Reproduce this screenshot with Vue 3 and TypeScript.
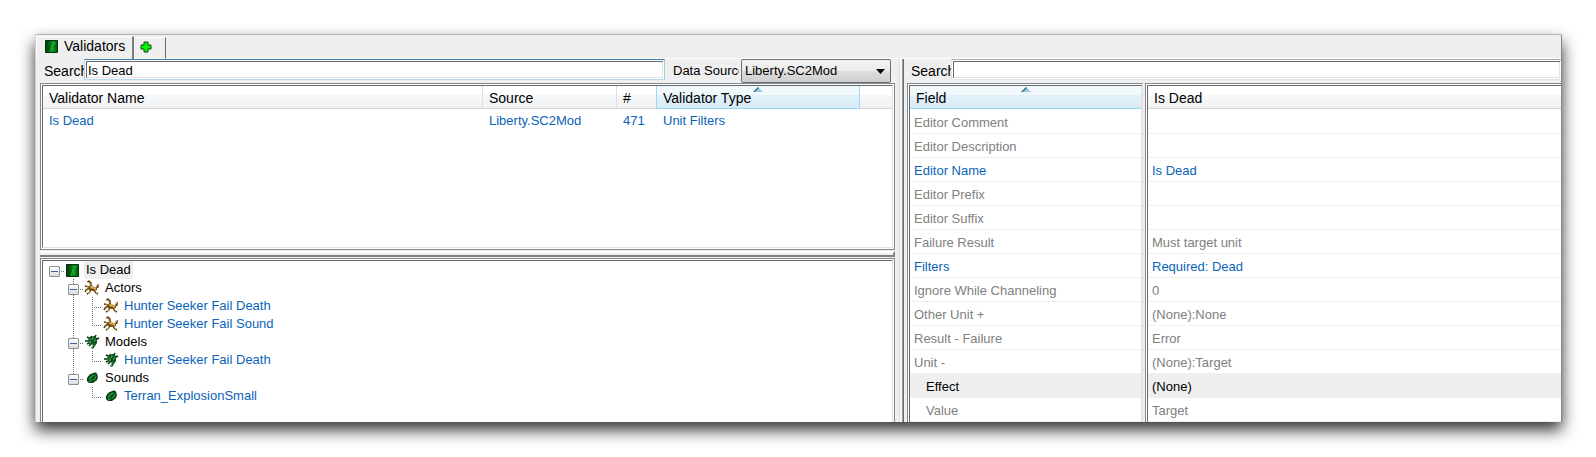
<script setup lang="ts">
import { ref } from 'vue'

type IconKind = 'validator' | 'actor' | 'model' | 'sound'
type Guide = 'blank' | 'line' | 'tee' | 'end' | 'toggle-first' | 'toggle-mid' | 'toggle-last'

interface TreeRow {
  label: string
  icon: IconKind
  guides: Guide[]
  level: number
  linked?: boolean
  selected?: boolean
}

interface FieldRow {
  name: string
  value: string
  state: 'default' | 'changed' | 'selected'
  nested?: boolean
}

const validatorSearch = ref('Is Dead')
const fieldSearch = ref('')
const source = ref('Liberty.SC2Mod')

const treeRows: TreeRow[] = [
  { label: 'Is Dead', icon: 'validator', guides: ['toggle-first'], level: 1, selected: true },
  { label: 'Actors', icon: 'actor', guides: ['blank', 'toggle-mid'], level: 2 },
  { label: 'Hunter Seeker Fail Death', icon: 'actor', guides: ['blank', 'line', 'tee'], level: 3, linked: true },
  { label: 'Hunter Seeker Fail Sound', icon: 'actor', guides: ['blank', 'line', 'end'], level: 3, linked: true },
  { label: 'Models', icon: 'model', guides: ['blank', 'toggle-mid'], level: 2 },
  { label: 'Hunter Seeker Fail Death', icon: 'model', guides: ['blank', 'line', 'end'], level: 3, linked: true },
  { label: 'Sounds', icon: 'sound', guides: ['blank', 'toggle-last'], level: 2 },
  { label: 'Terran_ExplosionSmall', icon: 'sound', guides: ['blank', 'blank', 'end'], level: 3, linked: true },
]

const fields: FieldRow[] = [
  { name: 'Editor Comment', value: '', state: 'default' },
  { name: 'Editor Description', value: '', state: 'default' },
  { name: 'Editor Name', value: 'Is Dead', state: 'changed' },
  { name: 'Editor Prefix', value: '', state: 'default' },
  { name: 'Editor Suffix', value: '', state: 'default' },
  { name: 'Failure Result', value: 'Must target unit', state: 'default' },
  { name: 'Filters', value: 'Required: Dead', state: 'changed' },
  { name: 'Ignore While Channeling', value: '0', state: 'default' },
  { name: 'Other Unit +', value: '(None):None', state: 'default' },
  { name: 'Result - Failure', value: 'Error', state: 'default' },
  { name: 'Unit -', value: '(None):Target', state: 'default' },
  { name: 'Effect', value: '(None)', state: 'selected', nested: true },
  { name: 'Value', value: 'Target', state: 'default', nested: true },
]

const verticalPath: Record<Guide, string> = {
  blank: '',
  line: 'M9.5 0V18',
  tee: 'M9.5 0V18M9 10.5H19',
  end: 'M9.5 0V10M9 10.5H19',
  'toggle-first': 'M16 10.5H19',
  'toggle-mid': 'M9.5 0V5M9.5 16V18M16 10.5H19',
  'toggle-last': 'M9.5 0V5M16 10.5H19',
}

const isToggle = (guide: Guide): boolean => guide.startsWith('toggle')
</script>

<template>
  <main class="window">
    <svg class="defs" aria-hidden="true">
      <defs>
        <linearGradient id="green-tile" x1="0" y1="0" x2="1" y2="0">
          <stop offset="0" stop-color="#033a0a" />
          <stop offset="0.35" stop-color="#055c12" />
          <stop offset="0.6" stop-color="#0b9a20" />
          <stop offset="1" stop-color="#034a0d" />
        </linearGradient>
        <symbol id="icon-validator" viewBox="0 0 16 16">
          <rect x="1" y="2" width="13" height="13" rx="1" fill="url(#green-tile)" />
          <rect x="1.5" y="2.5" width="12" height="12" rx="1" fill="none" stroke="#03300a" />
          <path d="M6 14 8 8 11 5" fill="none" stroke="#1fb434" />
          <path d="M8 5h4M7 8h3M7 11h3" fill="none" stroke="#27c63e" opacity=".6" />
        </symbol>
        <symbol id="icon-actor" viewBox="0 0 16 16">
          <path d="M3 2 5 1 7 3 7 6M1 6 5 7M5 8 2 10 1 12M7 10 5 13 3 14M10 10 12 13 14 14M11 8 14 7 14 4" fill="none" stroke="#4c300c" stroke-width="1.400" />
          <path d="M4 7 7 5 10 7 13 7 13 10 9 11 5 10Z" fill="#6e470f" />
          <path d="M4 2 6 3 6 5M2 6 5 7M5 9 2 11M7 11 5 12M11 11 13 13M12 8 13 5" fill="none" stroke="#bd8528" />
          <path d="M6 7 9 8 12 9" fill="none" stroke="#c99337" stroke-width="2" />
          <path d="M7 7h2M10 8h2M3 2h1M13 5h1M4 13h2M12 13h1" fill="none" stroke="#f0d596" />
        </symbol>
        <symbol id="icon-model" viewBox="0 0 16 16">
          <path d="M8 7 1 7M7 5 3 3M8 5 7 2M10 5 12 1M11 6 15 4M7 8 3 10M8 9 5 12" fill="none" stroke="#06330d" stroke-width="1.600" />
          <path d="M6 3 10 2 13 4 13 9 11 12 9 15 7 14 9 11 6 9 4 6Z" fill="#0a4f19" />
          <path d="M5 5 8 6M8 3 10 5M4 8 8 8M11 4 12 7M10 9 10 12" fill="none" stroke="#2a8f44" />
          <path d="M8 5h1M10 7h1M6 8h1M8 13h1" stroke="#8fd0a0" />
        </symbol>
        <symbol id="icon-sound" viewBox="0 0 16 16">
          <path d="M3 11C2 7 6 3 12 2.500Q15 6 13 10L9 13H5Z" fill="#053a10" />
          <path d="M4 10Q5 5 11 4Q14 7 11 10L7 12Z" fill="#0e6c22" />
          <path d="M6 9Q7 6 10 5M9 10 12 7M5 11 7 12" fill="none" stroke="#38a94e" />
          <path d="M8 9 10 7" stroke="#04260b" stroke-width="1.500" />
        </symbol>
      </defs>
    </svg>

    <nav class="tabs">
      <button type="button" class="tab tab-active">
        <svg class="icon" viewBox="0 0 16 16" aria-hidden="true"><use href="#icon-validator" /></svg>
        <span>Validators</span>
      </button>
      <button type="button" class="tab tab-add" aria-label="New tab">
        <svg width="12" height="12" viewBox="0 0 12 12" aria-hidden="true">
          <path d="M4 1h4v3h3v4H8v3H4V8H1V4h3z" fill="#10ee10" stroke="#064e06" stroke-linejoin="round" />
        </svg>
      </button>
      <div class="tab-fill"></div>
    </nav>

    <div class="panes">
      <section class="pane pane-left">
        <div class="toolbar">
          <label class="caption" for="validator-search">Search</label>
          <input id="validator-search" v-model="validatorSearch" class="search focused" type="text" />
          <label class="caption caption-source" for="data-source">Data Source</label>
          <div class="select-wrap">
            <select id="data-source" v-model="source">
              <option>Liberty.SC2Mod</option>
            </select>
            <svg class="arrow" width="9" height="5" viewBox="0 0 9 5" aria-hidden="true"><path d="M0 0h9L4.500 5z" /></svg>
          </div>
        </div>

        <div class="frame list-frame">
          <div class="frame-inner">
            <table class="list">
              <colgroup>
                <col />
                <col class="col-source" />
                <col class="col-count" />
                <col class="col-type" />
                <col class="col-rest" />
              </colgroup>
              <thead>
                <tr>
                  <th scope="col">Validator Name</th>
                  <th scope="col">Source</th>
                  <th scope="col">#</th>
                  <th scope="col" class="sorted" aria-sort="ascending">
                    <svg class="sort" width="10" height="5" viewBox="0 0 10 5" aria-hidden="true">
                      <path d="M0 5 5 0l5 5z" fill="#9cc9e0" /><path d="M0 5 5 0l1 1-4 4z" fill="#3c6f8c" />
                    </svg>
                    Validator Type
                  </th>
                  <td></td>
                </tr>
              </thead>
              <tbody>
                <tr>
                  <td>Is Dead</td>
                  <td>Liberty.SC2Mod</td>
                  <td>471</td>
                  <td>Unit Filters</td>
                  <td></td>
                </tr>
              </tbody>
            </table>
          </div>
        </div>

        <div class="splitter-h"></div>

        <div class="frame tree-frame">
          <div class="frame-inner">
            <ul class="tree" role="tree">
              <li v-for="(row, r) in treeRows" :key="r" class="tree-row" role="treeitem" :aria-level="row.level" :aria-selected="!!row.selected">
                <span v-for="(guide, g) in row.guides" :key="g" class="guide">
                  <svg width="19" height="18" viewBox="0 0 19 18" aria-hidden="true">
                    <path :d="verticalPath[guide]" fill="none" stroke="#707070" stroke-dasharray="1 1" />
                  </svg>
                  <button v-if="isToggle(guide)" type="button" class="toggle" :aria-label="'Collapse ' + row.label"></button>
                </span>
                <svg class="icon tree-icon" viewBox="0 0 16 16" aria-hidden="true"><use :href="'#icon-' + row.icon" /></svg>
                <span class="tree-label" :class="{ linked: row.linked, selected: row.selected }">{{ row.label }}</span>
              </li>
            </ul>
          </div>
        </div>
      </section>

      <div class="splitter-v"></div>

      <section class="pane pane-right">
        <div class="toolbar">
          <label class="caption" for="field-search">Search</label>
          <input id="field-search" v-model="fieldSearch" class="search open-end" type="text" />
        </div>
        <div class="grids">
          <div class="frame field-frame">
            <div class="frame-inner">
              <table class="fields">
                <thead>
                  <tr>
                    <th scope="col" class="sorted" aria-sort="ascending">
                      <svg class="sort" width="10" height="5" viewBox="0 0 10 5" aria-hidden="true">
                        <path d="M0 5 5 0l5 5z" fill="#9cc9e0" /><path d="M0 5 5 0l1 1-4 4z" fill="#3c6f8c" />
                      </svg>
                      Field
                    </th>
                  </tr>
                </thead>
                <tbody>
                  <tr v-for="field in fields" :key="field.name" :class="field.state">
                    <td :class="{ nested: field.nested }">{{ field.name }}</td>
                  </tr>
                </tbody>
              </table>
            </div>
          </div>
          <div class="frame value-frame">
            <div class="frame-inner">
              <table class="fields">
                <thead>
                  <tr><th scope="col">Is Dead</th></tr>
                </thead>
                <tbody>
                  <tr v-for="field in fields" :key="field.name" :class="field.state">
                    <td>{{ field.value }}</td>
                  </tr>
                </tbody>
              </table>
            </div>
          </div>
        </div>
      </section>
    </div>
  </main>
</template>

<style>
body {
  margin: 0;
  background: #fff;
}
</style>

<style scoped>
* {
  box-sizing: border-box;
}

.window {
  margin: 34px 34px 35px 35px;
  border: 1px solid #b4b4b4;
  border-left-color: #d0d0d0;
  border-right-color: #858585;
  border-bottom: 0;
  border-radius: 2px 2px 0 0;
  background: #efefef;
  box-shadow: 0 8px 16px rgba(0, 0, 0, 0.8);
  color: #000;
  font-family: 'Liberation Sans', Arial, sans-serif;
  font-size: 13px;
  line-height: 16px;
}

.defs {
  position: absolute;
  width: 0;
  height: 0;
}

button,
input,
select {
  font: inherit;
  color: inherit;
  margin: 0;
  border-radius: 0;
}

.icon {
  flex: none;
  width: 16px;
  height: 16px;
}

.tabs {
  display: flex;
  align-items: stretch;
  height: 24px;
}

.tab {
  display: flex;
  align-items: center;
  border: 0;
  background: #efefef;
}

.tab-active {
  gap: 4px;
  width: 98px;
  padding: 0 0 4px 7px;
  margin-top: 1px;
  border-top: 1px solid #fff;
  border-left: 1px solid #fff;
  border-right: 2px solid #7c7c7c;
  font-size: 14px;
}

.tab-add {
  width: 32px;
  margin-top: 2px;
  padding: 0 0 2px 6px;
  border-top: 1px solid #fff;
  border-right: 1px solid #696969;
  border-bottom: 1px solid #fff;
}

.tab-fill {
  flex: 1;
  border-bottom: 1px solid #fff;
}

.panes {
  display: grid;
  grid-template-columns: minmax(0, 863fr) 5px minmax(0, 657fr);
}

.pane {
  display: flex;
  flex-direction: column;
}

.pane-left {
  padding: 0 4px;
}

.pane-right {
  padding-left: 3px;
}

.toolbar {
  display: flex;
  align-items: flex-start;
  height: 24px;
}

.caption {
  flex: none;
  width: 44px;
  padding: 4px 0 0 4px;
  overflow: hidden;
  white-space: nowrap;
  font-size: 14px;
}

.caption-source {
  width: 66px;
  margin: 0 2px 0 8px;
  padding-left: 0;
  font-size: 13px;
}

.search {
  flex: 1;
  min-width: 0;
  height: 21px;
  padding: 1px 1px 0;
  border: 1px solid #e2e3ea;
  border-top-color: #abadb3;
  background: #fff;
  box-shadow: inset 1px 1px #fff, inset -1px -1px #fff, inset 2px 2px #696969, inset -2px -2px #e3e3e3;
  outline: 0;
}

.focused {
  padding-left: 3px;
  border-color: #3c7fb1 #a4c9e3 #b7d9ed #b5cfe7;
}

.open-end {
  border-right: 0;
}

.select-wrap {
  position: relative;
  width: 150px;
  margin-right: 4px;
}

select {
  display: block;
  appearance: none;
  width: 100%;
  height: 24px;
  padding: 0 20px 0 3px;
  border: 1px solid #707070;
  border-radius: 2px;
  background: linear-gradient(#f2f2f2, #ebebeb 49%, #dddddd 50%, #cfcfcf);
  outline: 0;
}

.arrow {
  position: absolute;
  right: 6px;
  top: 10px;
  pointer-events: none;
}

.frame {
  padding: 1px;
  border: 1px solid #828790;
  background: #fff;
}

.frame-inner {
  height: 100%;
  border: 1px solid #e3e3e3;
  border-top-color: #696969;
  border-left-color: #696969;
  background: #fff;
}

.list-frame {
  height: 167px;
}

.splitter-h {
  height: 6px;
  margin: 1px 0;
  border: 1px solid #fff;
  border-width: 2px 2px 2px 0;
  border-color: #fff #828282 #828282;
  background: #efefef;
}

.tree-frame {
  flex: 1;
}

.tree-frame,
.tree-frame .frame-inner,
.field-frame,
.field-frame .frame-inner,
.value-frame,
.value-frame .frame-inner {
  border-bottom: 0;
  padding-bottom: 0;
}

table {
  width: 100%;
  table-layout: fixed;
  border-collapse: separate;
  border-spacing: 0;
}

.col-source {
  width: 134px;
}

.col-count {
  width: 40px;
}

.col-type {
  width: 203px;
}

.col-rest {
  width: 32px;
}

th,
thead td {
  position: relative;
  height: 23px;
  padding: 2px 0 0 6px;
  border-bottom: 1px solid #d5d5d5;
  background: linear-gradient(#fff 0 40%, #f7f8fa 41%, #f1f2f4);
  font-size: 14px;
  font-weight: normal;
  text-align: left;
  white-space: nowrap;
}

.list th {
  border-right: 1px solid #dfe0e2;
}

.list tbody td {
  height: 24px;
  padding: 0 0 0 6px;
  color: #0a63b8;
}

th.sorted {
  border-bottom-color: #96d9f9;
  background: linear-gradient(#f2f9fc 0 40%, #e1f1f9 41%, #d8ecf6);
}

.list th.sorted {
  border-right-color: #96d9f9;
  box-shadow: -1px 0 #96d9f9;
}

.sort {
  position: absolute;
  left: calc(50% - 5px);
  top: 1px;
}

.tree {
  margin: 0;
  padding: 0 0 0 2px;
  list-style: none;
}

.tree-row {
  display: flex;
  height: 18px;
}

.guide {
  position: relative;
  flex: none;
  width: 19px;
  height: 18px;
}

.guide svg {
  display: block;
}

.toggle {
  position: absolute;
  left: 4px;
  top: 5px;
  width: 11px;
  height: 11px;
  padding: 0;
  border: 1px solid #8e8f8f;
  border-radius: 1px;
  background: linear-gradient(#3f5fa5, #3f5fa5) center / 7px 1px no-repeat, linear-gradient(#fff, #dcdcdc);
}

.tree-icon {
  margin: 1px 3px 0 1px;
}

.tree-label {
  padding: 1px 2px;
  white-space: nowrap;
}

.tree-label.linked {
  color: #0a63b8;
}

.tree-label.selected {
  background: #efefef;
}

.splitter-v {
  border-left: 1px solid #dcdcdc;
  border-right: 1px solid #696969;
  background: linear-gradient(90deg, #fff 0 1px, #efefef 1px 2px, #a0a0a0 2px 3px);
}

.grids {
  display: grid;
  grid-template-columns: minmax(0, 236fr) minmax(0, 416fr);
  column-gap: 2px;
}

.field-frame {
  border-right: 0;
  padding-right: 0;
}

.field-frame .frame-inner {
  border-right: 2px solid #e3e3e3;
}

.value-frame,
.value-frame .frame-inner {
  border-right: 0;
  padding-right: 0;
}

.fields td {
  height: 24px;
  padding: 2px 0 0 4px;
  border-bottom: 1px solid #efefef;
  white-space: nowrap;
}

.fields tbody tr:first-child td {
  height: 25px;
  padding-top: 3px;
}

.fields td.nested {
  padding-left: 16px;
}

.default {
  color: #808080;
}

.changed {
  color: #0a63b8;
}

.selected td {
  background: #efefef;
}
</style>
